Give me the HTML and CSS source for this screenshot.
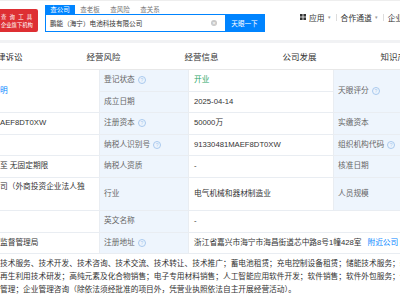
FILE: index.html
```html
<!DOCTYPE html>
<html lang="zh">
<head>
<meta charset="utf-8">
<title>鹏能（海宁）电池科技有限公司</title>
<link rel="stylesheet" href="styles.css">
</head>
<body>
<header class="top">
  <div class="logo">
    <span class="logo-l1">查询工具</span>
    <span class="logo-l2">企业旗下机构</span>
  </div>
  <div class="search">
    <div class="stabs">
      <span class="st on">查公司</span>
      <span class="st">查老板</span>
      <span class="st">查风险</span>
      <span class="st">查关系</span>
    </div>
    <div class="sbox">
      <div class="sinput">
        <span class="stext">鹏能（海宁）电池科技有限公司</span>
        <span class="clear">×</span>
      </div>
      <span class="sbtn">天眼一下</span>
    </div>
  </div>
  <nav class="nav">
    <svg class="appicon" width="6" height="6" viewBox="0 0 6 6"><rect x="0" y="0" width="2.6" height="2.6" fill="#333"/><rect x="3.4" y="0" width="2.6" height="2.6" fill="#333"/><rect x="0" y="3.4" width="2.6" height="2.6" fill="#333"/><rect x="3.4" y="3.4" width="2.6" height="2.6" fill="#333"/></svg>
    <span class="navitem">应用</span><span class="caret">▾</span>
    <span class="sep"></span>
    <span class="navitem">合作通道</span><span class="caret">▾</span>
    <span class="sep"></span>
    <span class="navitem">企业服务</span>
  </nav>
</header>
<div class="band"></div>
<div class="tabs">
  <span class="tab">律诉讼</span>
  <span class="tab">经营风险</span>
  <span class="tab">经营信息</span>
  <span class="tab">公司发展</span>
  <span class="tab">知识产权</span>
</div>
<div class="grid">
  <div class="c v0 span2r"><span class="link">明</span></div>
  <div class="c lab">登记状态<i class="q">?</i></div>
  <div class="c val green">开业</div>
  <div class="c lab span2r">天眼评分<i class="q">?</i></div>
  <div class="c val span2r"></div>

  <div class="c lab">成立日期</div>
  <div class="c val">2025-04-14</div>

  <div class="c v0">AEF8DT0XW</div>
  <div class="c lab">注册资本<i class="q">?</i></div>
  <div class="c val">50000万</div>
  <div class="c lab">实缴资本</div>
  <div class="c val"></div>

  <div class="c v0"></div>
  <div class="c lab">纳税人识别号<i class="q">?</i></div>
  <div class="c val">91330481MAEF8DT0XW</div>
  <div class="c lab">组织机构代码<i class="q">?</i></div>
  <div class="c val"></div>

  <div class="c v0">至 无固定期限</div>
  <div class="c lab">纳税人资质</div>
  <div class="c val">-</div>
  <div class="c lab">核准日期</div>
  <div class="c val"></div>

  <div class="c v0 top-al">司（外商投资企业法人独</div>
  <div class="c lab">行业</div>
  <div class="c val">电气机械和器材制造业</div>
  <div class="c lab">人员规模</div>
  <div class="c val"></div>

  <div class="c v0"></div>
  <div class="c lab">英文名称</div>
  <div class="c val span3c">-</div>

  <div class="c v0">监督管理局</div>
  <div class="c lab">注册地址<i class="q">?</i></div>
  <div class="c val span3c">浙江省嘉兴市海宁市海昌街道芯中路8号1幢428室<span class="link near">附近公司</span></div>

  <div class="c scope">技术服务、技术开发、技术咨询、技术交流、技术转让、技术推广；蓄电池租赁；充电控制设备租赁；储能技术服务；新兴能源技术研发；<br>再生利用技术研发；高纯元素及化合物销售；电子专用材料销售；人工智能应用软件开发；软件销售；软件外包服务；信息系统集成服务；<br>管理；企业管理咨询（除依法须经批准的项目外，凭营业执照依法自主开展经营活动）。</div>
</div>
</body>
</html>
```
FILE: styles.css
```css
html, body {
  margin: 0;
  padding: 0;
  background: #fff;
  overflow: hidden;
  width: 400px;
  height: 300px;
}
body {
  font-family: "Liberation Sans", "Noto Sans CJK SC", sans-serif;
  color: #333;
}

/* header */
.top {
  display: flex;
  height: 39px;
  border-top: 1px solid #eeeeee;
  background: #fff;
}
.logo {
  flex: 0 0 38px;
  width: 38px;
  height: 23px;
  margin-top: 8px;
  background: #de2f33;
  border-radius: 0 2px 2px 0;
  display: flex;
  flex-direction: column;
  justify-content: center;
  color: #fff;
  padding-left: 1px;
  box-sizing: border-box;
  overflow: hidden;
  white-space: nowrap;
}
.logo-l1 {
  font-size: 5.4px;
  line-height: 8px;
  letter-spacing: 3.2px;
}
.logo-l2 {
  font-size: 5.3px;
  line-height: 8px;
}
.search {
  flex: 0 0 220px;
  margin-left: 7px;
  margin-top: 4px;
  display: flex;
  flex-direction: column;
}
.stabs {
  display: flex;
  height: 9px;
}
.st {
  width: 30px;
  font-size: 6.5px;
  line-height: 9px;
  text-align: center;
  color: #777;
}
.st.on {
  background: #0084ff;
  color: #fff;
}
.sbox {
  display: flex;
  width: 220px;
  height: 18px;
  border: 1px solid #0084ff;
  box-sizing: border-box;
}
.sinput {
  flex: 1;
  display: flex;
  align-items: center;
  padding-left: 4px;
}
.stext {
  font-size: 6.6px;
  color: #333;
  white-space: nowrap;
}
.clear {
  margin-left: auto;
  margin-right: 8px;
  width: 6px;
  height: 6px;
  border-radius: 50%;
  background: #c8c8c8;
  color: #fff;
  font-size: 6px;
  line-height: 6px;
  text-align: center;
}
.sbtn {
  width: 39px;
  background: #0084ff;
  color: #fff;
  font-size: 6.6px;
  display: flex;
  align-items: center;
  justify-content: center;
  white-space: nowrap;
}
.nav {
  margin-left: 35px;
  display: flex;
  align-items: center;
  height: 32px;
  white-space: nowrap;
}
.appicon {
  margin-right: 3px;
}
.navitem {
  font-size: 7.8px;
  color: #333;
}
.caret {
  font-size: 5px;
  color: #999;
  margin-left: 3px;
}
.sep {
  width: 1px;
  height: 7px;
  background: #ddd;
  margin: 0 4px 0 5px;
}

/* band */
.band {
  height: 3px;
  background: #f1f2f4;
}

/* tabs */
.tabs {
  display: flex;
  gap: 64px;
  height: 26px;
  align-items: center;
  border-bottom: 1px solid #e8e8e8;
  white-space: nowrap;
  margin-left: -3px;
}
.tab {
  font-size: 8.5px;
  color: #333;
}

/* grid table */
.grid {
  display: grid;
  grid-template-columns: 99px 88px 144px 89px 200px;
  grid-template-rows: repeat(5, 20.5px) 32.5px 20.5px 20.5px auto;
  gap: 1px;
  background: #e9edf2;
  width: 625px;
  font-size: 7.7px;
  line-height: 12px;
}
.c {
  background: #fff;
  display: flex;
  align-items: center;
  padding: 0 5px;
  white-space: nowrap;
  overflow: hidden;
}
.v0 {
  padding-left: 0;
}
.lab {
  background: #eef5fd;
  color: #666;
  padding-left: 4px;
}
.val {
  color: #333;
}
.span2r {
  grid-row: span 2;
}
.span3c {
  grid-column: span 3;
}
.top-al {
  align-items: flex-start;
  padding-top: 3px;
}
.green {
  color: #2aa868;
}
.link {
  color: #0084ff;
}
.near {
  margin-left: 6px;
}
.q {
  font-style: normal;
  display: inline-block;
  width: 6px;
  height: 6px;
  border: 0.8px solid #a9c9ee;
  border-radius: 50%;
  color: #a9c9ee;
  font-size: 5px;
  line-height: 6px;
  text-align: center;
  margin-left: 3px;
}
.scope {
  grid-column: 1 / -1;
  display: block;
  padding: 3px 0 0 0;
  line-height: 13px;
  color: #333;
}
```
